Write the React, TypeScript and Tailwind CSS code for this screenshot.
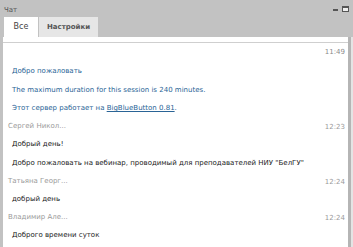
import React from 'react';

type Msg =
    | { kind: 'time'; time: string }
    | { kind: 'sys'; text: React.ReactNode }
    | { kind: 'name'; name: string; time: string }
    | { kind: 'text'; text: string };

const messages: Msg[] = [
    { kind: 'time', time: '11:49' },
    { kind: 'sys', text: 'Добро пожаловать' },
    { kind: 'sys', text: 'The maximum duration for this session is 240 minutes.' },
    {
        kind: 'sys',
        text: (
            <span>
                Этот сервер работает на <span className="underline">BigBlueButton 0.81</span>.
            </span>
        ),
    },
    { kind: 'name', name: 'Сергей Никол...', time: '12:23' },
    { kind: 'text', text: 'Добрый день!' },
    { kind: 'text', text: 'Добро пожаловать на вебинар, проводимый для преподавателей НИУ "БелГУ"' },
    { kind: 'name', name: 'Татьяна Георг...', time: '12:24' },
    { kind: 'text', text: 'добрый день' },
    { kind: 'name', name: 'Владимир Але...', time: '12:24' },
    { kind: 'text', text: 'Доброго времени суток' },
];

const ChatRow: React.FC<{ msg: Msg }> = ({ msg }) => {
    if (msg.kind === 'time') {
        return <div className="h-[19px] flex items-center justify-end pr-[3px] text-[#8a8a8a]">{msg.time}</div>;
    }
    if (msg.kind === 'sys') {
        return <div className="h-[18.5px] flex items-center pl-[9px] text-[#2a6496]">{msg.text}</div>;
    }
    if (msg.kind === 'name') {
        return (
            <div className="h-[18px] flex items-center justify-between pl-[5px] pr-[3px] text-[#9a9a9a]">
                <span>{msg.name}</span>
                <span className="pt-[2px]">{msg.time}</span>
            </div>
        );
    }
    return <div className="h-[18.2px] flex items-center pl-[9px] text-[#1a1a1a]">{msg.text}</div>;
};

export default function App() {
    return (
        <div className="w-[353px] h-[247px] bg-[#c2c2c2] flex flex-col overflow-hidden text-[7px] font-['DejaVu_Sans',sans-serif]">
            {/* header */}
            <div className="h-[17px] flex items-center justify-between pl-[4px] pr-[4px] text-[#555]">
                <span className="pt-[4px]">Чат</span>
                <div className="flex items-center gap-[4px]">
                    <span className="w-[5px] h-[1.5px] bg-[#555] mt-[3px]" />
                    <span className="w-[7px] h-[6px] border border-[#555] border-t-2 bg-[#eee]" />
                </div>
            </div>
            {/* tabs */}
            <div className="flex pl-[4px] h-[20px] pr-[5px]">
                <div className="w-[34px] bg-white flex items-center justify-center text-[#444] text-[8px]">Все</div>
                <div className="ml-[1px] w-[59px] bg-[#e6e6e6] flex items-center justify-center font-bold text-[#555] text-[7px]">
                    Настройки
                </div>
            </div>
            {/* body */}
            <div className="flex-1 flex pl-[3px]">
                <div className="flex-1 bg-white flex flex-col">
                    <div className="h-[6px] border-b border-[#cfcfcf]" />
                    <div className="flex flex-col">
                        {messages.map((m, i) => (
                            <ChatRow key={i} msg={m} />
                        ))}
                    </div>
                </div>
                <div className="w-[3px] bg-[#b5b5b5]" />
                <div className="w-[2px] bg-[#e4e4e4]" />
            </div>
        </div>
    );
}
